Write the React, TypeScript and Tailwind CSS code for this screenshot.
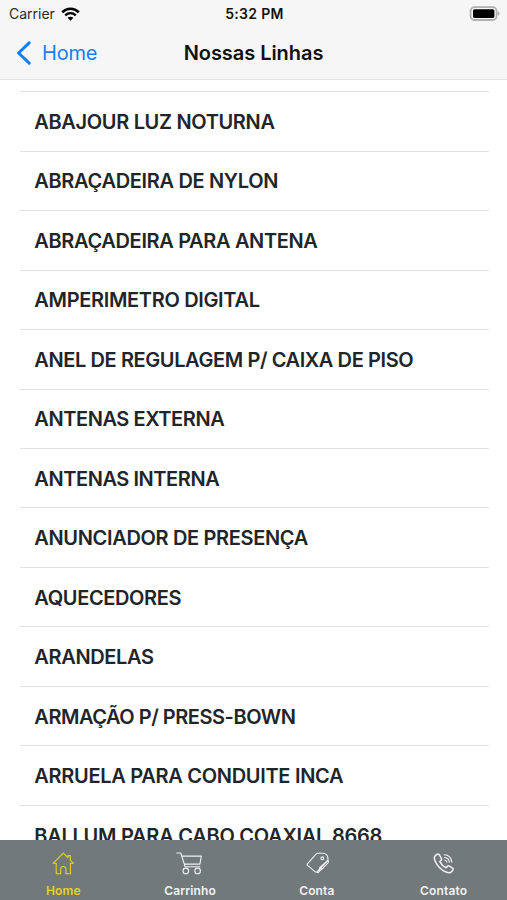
import React from "react";

const lines = [
  { name: "ABAJOUR LUZ NOTURNA", tracking: "tracking-[-0.34px]" },
  { name: "ABRAÇADEIRA DE NYLON", tracking: "tracking-[-0.33px]" },
  { name: "ABRAÇADEIRA PARA ANTENA", tracking: "tracking-[-0.35px]" },
  { name: "AMPERIMETRO DIGITAL", tracking: "tracking-[-0.33px]" },
  { name: "ANEL DE REGULAGEM P/ CAIXA DE PISO", tracking: "tracking-[-0.4px]" },
  { name: "ANTENAS EXTERNA", tracking: "tracking-[-0.43px]" },
  { name: "ANTENAS INTERNA", tracking: "tracking-[-0.43px]" },
  { name: "ANUNCIADOR DE PRESENÇA", tracking: "tracking-[-0.34px]" },
  { name: "AQUECEDORES", tracking: "tracking-[-0.36px]" },
  { name: "ARANDELAS", tracking: "tracking-[-0.35px]" },
  { name: "ARMAÇÃO P/ PRESS-BOWN", tracking: "tracking-[-0.47px]" },
  { name: "ARRUELA PARA CONDUITE INCA", tracking: "tracking-[-0.3px]" },
  { name: "BALLUM PARA CABO COAXIAL 8668", tracking: "tracking-[-0.26px]" },
];

type TabProps = {
  label: string;
  active?: boolean;
  children: React.ReactNode;
};

const Tab = ({ label, active, children }: TabProps) => {
  return (
    <button
      className={`flex flex-1 flex-col items-center pt-[11px] ${
        active ? "text-[#e8d21d]" : "text-[#f1f2f2]"
      }`}
    >
      <svg
        className="h-6 w-6 overflow-visible"
        viewBox="0 0 24 24"
        fill="none"
        stroke="currentColor"
        strokeWidth="1.1"
        strokeLinecap="round"
        strokeLinejoin="round"
      >
        {children}
      </svg>
      <span className="mt-[8px] text-[12px] leading-4 font-semibold tracking-[0.15px]">
        {label}
      </span>
    </button>
  );
};

const StatusBar = () => {
  return (
    <div className="grid h-[27px] grid-cols-3 items-center pr-[7px] pl-[9px] text-[14px]">
      <div className="flex items-center gap-[6px]">
        <span className="text-[#2a2a2a]">Carrier</span>
        <svg className="h-[14px] w-[19px]" viewBox="0 0 19 14" fill="none" stroke="#000">
          <path d="M1.2 5.2C6 .6 13 .6 17.8 5.2" strokeWidth="2.6" />
          <path d="M4.2 8.3c3.2-2.9 7.4-2.9 10.6 0" strokeWidth="2.4" />
          <path d="M9.5 13.7 6.6 10.8c1.8-1.5 4-1.5 5.8 0z" fill="#000" stroke="none" />
        </svg>
      </div>
      <span className="text-center font-semibold tracking-[0.3px] text-[#111]">5:32 PM</span>
      <svg className="h-4 w-[31px] justify-self-end" viewBox="0 0 31 16">
        <rect x="1.6" y="1.2" width="26" height="12.8" rx="4" fill="#f7f7f7" stroke="#b0b0b0" strokeWidth="1.8" />
        <rect x="4" y="3.2" width="21.4" height="8.8" rx="1.6" fill="#000" />
        <path d="M28.8 5.3c2.4.9 2.4 3.7 0 4.6z" fill="#b0b0b0" />
      </svg>
    </div>
  );
};

const App = () => {
  return (
    <div className="flex h-[900px] w-[507px] flex-col overflow-hidden bg-white font-['Inter',sans-serif]">
      <header className="h-20 shrink-0 border-b border-[#e2e2e2] bg-[#f7f6f7]">
        <StatusBar />
        <div className="grid h-[51px] grid-cols-[1fr_auto_1fr] items-center">
          <button className="flex items-center gap-[11px] pl-4 text-[20px] tracking-[-0.2px] text-[#147efb]">
            <svg className="h-6 w-[15px]" viewBox="0 0 15 24" fill="none" stroke="currentColor" strokeWidth="3">
              <path d="M13.2 1.8 2.6 12l10.6 10.2" strokeLinecap="round" strokeLinejoin="round" />
            </svg>
            <span>Home</span>
          </button>
          <h1 className="text-[20px] font-semibold tracking-[-0.05px] text-[#111]">Nossas Linhas</h1>
        </div>
      </header>

      <main className="min-h-0 flex-1 overflow-hidden pt-[11.2px] pr-[18px] pl-5">
        <ul className="border-t border-[#dfe1e2]">
          {lines.map((line) => (
            <li
              key={line.name}
              className={`flex h-[59.47px] items-center border-b border-[#dfe1e2] pt-px pl-[14.3px] text-[20px] font-semibold whitespace-nowrap text-[#212529] ${line.tracking}`}
            >
              {line.name}
            </li>
          ))}
        </ul>
      </main>

      <nav className="flex h-[60px] shrink-0 bg-[#72797b]">
        <Tab label="Home" active>
          <path d="M5.2 12.3H2.1L12.3 2.2l4.6 4.5V4.6h2.4v4.5l3.3 3.2h-3.2v10.4h-4.5v-4.6a2.6 2.6 0 0 0-5.2 0v4.6H5.2z" />
        </Tab>
        <Tab label="Carrinho">
          <path d="M-1.2 2h4l4.3 13.7h14.8M4 5.1h19.3l-1.4 8H6.3" />
          <circle cx="7.8" cy="19.9" r="2.8" />
          <circle cx="19.6" cy="19.9" r="2.8" />
        </Tab>
        <Tab label="Conta">
          <path d="M2.4 12.9 11 3.1c.5-.6 1.1-.9 1.9-.9h5c2.8.1 4.8 2.2 5 4.8v2.4L12 20.8c-.5.6-1.1.6-1.7.1L2.5 14.3c-.5-.4-.5-.9-.1-1.4z" />
          <path d="M22.9 9.4c.8.7.8 1.6.1 2.4l-6.3 6.6c-.7.7-1.5.8-2.6.8M14.1 19.2l.7-2.9 2.2 2M14.8 16.3l8.1-6.9M12 20.8l1.1.9 2.5-2.6" />
          <circle cx="17.3" cy="7.3" r="1.4" />
        </Tab>
        <Tab label="Contato">
          <path d="M4.9 3.4 3.2 4.8c-1.3 1.2-.8 3.5 0 5.4 2.1 4.7 6 8.7 10.8 10.8 2.3 1 4.3 1.1 5.5-.3l1.2-1.4c.7-.8.6-1.5-.2-2.1l-3-2.1c-.8-.6-1.6-.5-2.2.3l-1.2 1.4c-2.8-1.3-4.9-3.4-6.3-6.2l1.3-1.3c.7-.7.8-1.3.2-2.2L7.2 3.7c-.7-.9-1.4-1-2.3-.3z" strokeWidth="1.5" />
          <path d="M12.2 3.8c4.4.1 7.5 3.2 7.6 7.4M12.6 6.5c2.8.3 4.5 1.9 4.7 4.6M12.8 9c1.3.3 2 1 2.1 2.1" />
        </Tab>
      </nav>
    </div>
  );
};

export default App;
